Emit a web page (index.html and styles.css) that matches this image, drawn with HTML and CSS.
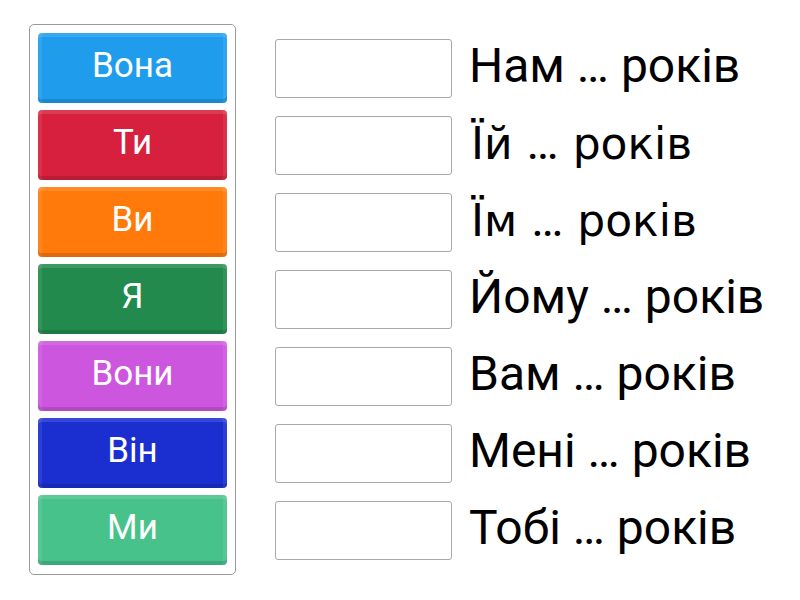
FILE: index.html
```html
<!DOCTYPE html>
<html lang="uk">
<head>
<meta charset="utf-8">
<link rel="stylesheet" href="styles.css">
</head>
<body>
<div class="page">
  <div class="bank">
    <div class="tile c-blue">Вона</div>
    <div class="tile c-red">Ти</div>
    <div class="tile c-orange">Ви</div>
    <div class="tile c-green">Я</div>
    <div class="tile c-purple">Вони</div>
    <div class="tile c-navy">Він</div>
    <div class="tile c-mint">Ми</div>
  </div>
  <div class="rows">
    <div class="row"><div class="slot"></div><span class="phrase">Нам … років</span></div>
    <div class="row"><div class="slot"></div><span class="phrase alt">Їй <span class="dots">…</span> років</span></div>
    <div class="row"><div class="slot"></div><span class="phrase alt">Їм <span class="dots">…</span> років</span></div>
    <div class="row"><div class="slot"></div><span class="phrase">Йому … років</span></div>
    <div class="row"><div class="slot"></div><span class="phrase">Вам … років</span></div>
    <div class="row"><div class="slot"></div><span class="phrase">Мені … років</span></div>
    <div class="row"><div class="slot"></div><span class="phrase">Тобі … років</span></div>
  </div>
</div>
</body>
</html>
```
FILE: styles.css
```css
html, body {
  margin: 0;
  padding: 0;
  background: #ffffff;
}
.page {
  display: flex;
  align-items: flex-start;
  padding: 24px 0 0 29px;
  font-family: Roboto, "Liberation Sans", sans-serif;
}
.bank {
  width: 189px;
  border: 1px solid #9a9a9a;
  border-radius: 5px;
  padding: 8px 8px 9px 8px;
  display: flex;
  flex-direction: column;
  gap: 7px;
}
.tile {
  height: 70px;
  border-radius: 4px;
  display: flex;
  align-items: center;
  justify-content: center;
  color: #ffffff;
  font-size: 35px;
  font-weight: 400;
  padding-bottom: 5px;
  box-sizing: border-box;
  box-shadow: inset 0 -4px 0 rgba(0,0,0,0.13), inset 0 4px 0 rgba(255,255,255,0.12), inset 4px 0 0 rgba(255,255,255,0.08), inset -4px 0 0 rgba(255,255,255,0.08);
}
.c-blue { background: #1f9dec; }
.c-red { background: #d6203d; }
.c-orange { background: #ff7a0a; }
.c-green { background: #238a4e; }
.c-purple { background: #cd56de; }
.c-navy { background: #1b2fd0; }
.c-mint { background: #47c28b; }

.rows {
  margin-left: 39px;
  margin-top: 15px;
  display: flex;
  flex-direction: column;
  gap: 18px;
}
.row {
  display: flex;
  align-items: flex-start;
  gap: 17px;
}
.slot {
  width: 177px;
  height: 59px;
  box-sizing: border-box;
  border: 1px solid #a8a8a8;
  border-radius: 3px;
  flex: none;
}
.phrase {
  font-size: 48px;
  line-height: 53px;
  color: #000000;
  white-space: nowrap;
}
.phrase.alt {
  font-family: "DejaVu Sans", sans-serif;
  font-size: 44px;
  padding-left: 2px;
}
.dots {
  font-family: Roboto, sans-serif;
  font-size: 48px;
}
```
